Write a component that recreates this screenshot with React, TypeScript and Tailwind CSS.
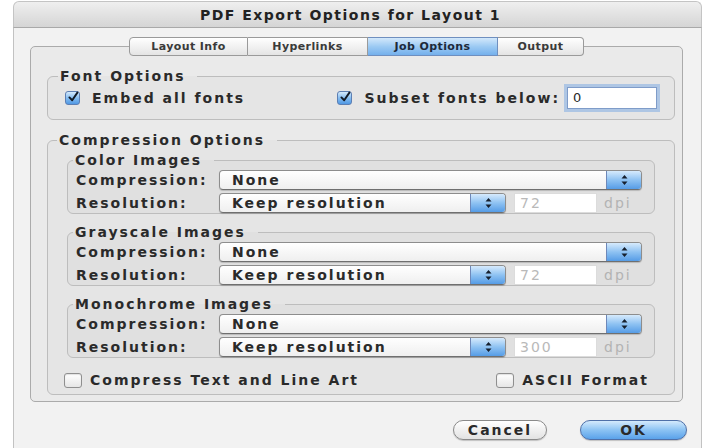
import type { ReactNode } from "react";

const tabs = [
  { name: "Layout Info", width: "w-[119px]" },
  { name: "Hyperlinks", width: "w-[120px]" },
  { name: "Job Options", width: "w-[130px]", active: true },
  { name: "Output", width: "w-[86px]" },
];

const imageGroups = [
  { title: "Color Images", dpi: "72" },
  { title: "Grayscale Images", dpi: "72" },
  { title: "Monochrome Images", dpi: "300" },
];

function Group({
  title,
  legendClass,
  className,
  children,
}: {
  title: string;
  legendClass: string;
  className: string;
  children: ReactNode;
}) {
  return (
    <fieldset
      className={`rounded-[6px] border border-[#bdbdbd] bg-black/[0.02] ${className}`}
    >
      <legend className={`pl-[2px] pr-[12px] leading-[16px] ${legendClass}`}>
        {title}
      </legend>
      {children}
    </fieldset>
  );
}

function Checkbox({ checked, label }: { checked?: boolean; label: string }) {
  return (
    <div className="flex items-center">
      {checked ? (
        <span className="flex h-[14px] w-[15px] items-center justify-center rounded-[3px] border border-[#5d7fb3] bg-linear-to-b from-[#d5eafc] via-[#86bdf0] to-[#4f98e4]">
          <svg width="15" height="14" viewBox="0 0 15 14" className="-mt-[3px] ml-[1px]">
            <path
              d="M3 7.5 L6.5 11 L13 1.5"
              stroke="#121a26"
              strokeWidth="2.4"
              fill="none"
              strokeLinecap="round"
              strokeLinejoin="round"
            />
          </svg>
        </span>
      ) : (
        <span className="h-[15px] w-[18px] rounded-[3px] border border-[#8f8f8f] bg-linear-to-b from-white to-[#e6e6e6] shadow-[inset_0_1px_1px_rgba(0,0,0,0.12)]" />
      )}
      <span className={checked ? "ml-[12px]" : "ml-[8px]"}>{label}</span>
    </div>
  );
}

function Popup({ value, className }: { value: string; className: string }) {
  return (
    <div
      className={`flex h-[20px] overflow-hidden rounded-[4px] border border-[#8d8d8d] border-b-[#6f6f6f] bg-linear-to-b from-white to-[#efefef] shadow-[0_1px_1px_rgba(0,0,0,0.18)] ${className}`}
    >
      <span className="flex-1 pl-[12px] leading-[18px]">{value}</span>
      <span className="flex w-[35px] items-center justify-center border-l border-[#6e88b9] bg-linear-to-b from-[#d6eafc] via-[#8ec2f2] to-[#559ce6]">
        <svg width="7" height="12" viewBox="0 0 7 12">
          <path d="M3.5 1 L6.5 4.5 H0.5Z M3.5 11 L6.5 7.5 H0.5Z" fill="#16202e" />
        </svg>
      </span>
    </div>
  );
}

function ImageGroup({ title, dpi, first }: { title: string; dpi: string; first: boolean }) {
  return (
    <Group
      title={title}
      legendClass="ml-[5px]"
      className={first ? "mx-[19px] mt-[4px]" : "mx-[19px] mt-[10px]"}
    >
      <div className="mt-[2px] flex flex-col gap-[3px] pl-[8px]">
        <div className="flex h-[20px] items-center">
          <span className="w-[143px]">Compression:</span>
          <Popup value="None" className="w-[423px]" />
        </div>
        <div className="flex h-[20px] items-center">
          <span className="w-[143px]">Resolution:</span>
          <Popup value="Keep resolution" className="w-[287px]" />
          <span className="ml-[8px] h-[20px] w-[83px] border border-[#dcdcdc] bg-white pl-[5px] leading-[18px] font-normal text-[#b9b9b9]">
            {dpi}
          </span>
          <span className="ml-[7px] font-normal text-[#b3b3b3]">dpi</span>
        </div>
      </div>
    </Group>
  );
}

export default function App() {
  return (
    <div className="h-[448px] w-[710px] overflow-hidden bg-white font-['DejaVu_Sans',sans-serif] text-[14px] leading-[20px] font-bold tracking-[2px] text-[#2a2a2a]">
      <div className="ml-[13px] mt-[1px] flex h-[447px] w-[689px] flex-col">
        <div className="flex h-[26px] shrink-0 items-center justify-center rounded-t-[6px] border border-b-0 border-[#c4c4c4] bg-linear-to-b from-[#efefef] to-[#d5d5d5] pr-[14px] tracking-[1.5px] text-[#222]">
          PDF Export Options for Layout 1
        </div>

        <div className="flex-1 border-x border-t border-x-[#c2c2c2] border-t-[#a9a9a9] bg-[#f2f2f2] pl-[16px] pr-[14px]">
          <div className="mt-[18px] h-[356px] w-[653px] rounded-[5px] border border-[#ababab] bg-[#eaeaea]">
            <div className="relative -mt-[10px] flex h-[19px] justify-center text-[11px] leading-[17px] tracking-[0.4px]">
              {tabs.map((tab) => (
                <div
                  key={tab.name}
                  className={`flex items-center justify-center border border-l-0 first:rounded-l-[4px] first:border-l last:rounded-r-[4px] ${tab.width} ${
                    tab.active
                      ? "border-[#6f8fbf] bg-linear-to-b from-[#d3e8fb] via-[#9ccaf3] to-[#74b0ec] text-[#1d2a3a]"
                      : "border-[#9a9a9a] bg-linear-to-b from-white to-[#e4e4e4] text-[#3a3a3a]"
                  }`}
                >
                  {tab.name}
                </div>
              ))}
            </div>

            <div className="pl-[16px] pr-[7px]">
              <Group title="Font Options" legendClass="ml-[10px]" className="mt-[12px] pb-[12px]">
                <div className="mt-[5px] flex h-[18px] items-center justify-between pl-[17px] pr-[17px]">
                  <Checkbox checked label="Embed all fonts" />
                  <div className="flex items-center">
                    <Checkbox checked label="Subset fonts below:" />
                    <span className="ml-[7px] h-[22px] w-[90px] border border-[#7f9cc9] bg-white pl-[5px] text-[13px] font-normal leading-[20px] shadow-[0_0_0_3px_rgba(120,168,228,0.5)]">
                      0
                    </span>
                  </div>
                </div>
              </Group>

              <Group title="Compression Options" legendClass="ml-[9px]" className="mt-[12px] pb-[5px]">
                {imageGroups.map((g, i) => (
                  <ImageGroup key={g.title} title={g.title} dpi={g.dpi} first={i === 0} />
                ))}
                <div className="mt-[13px] flex h-[18px] items-center justify-between pl-[16px] pr-[25px]">
                  <Checkbox label="Compress Text and Line Art" />
                  <Checkbox label="ASCII Format" />
                </div>
              </Group>
            </div>
          </div>

          <div className="mt-[18px] flex justify-end gap-[33px]">
            <button className="h-[20px] w-[94px] rounded-full border border-[#8a8a8a] bg-linear-to-b from-white to-[#e2e2e2] leading-[18px] shadow-[0_1px_1px_rgba(0,0,0,0.2)]">
              Cancel
            </button>
            <button className="h-[20px] w-[107px] rounded-full border border-[#4f70a8] bg-linear-to-b from-[#d4eafc] via-[#8cc3f3] to-[#5aa2ea] leading-[18px] shadow-[0_1px_1px_rgba(0,0,0,0.2)]">
              OK
            </button>
          </div>
        </div>
      </div>
    </div>
  );
}
